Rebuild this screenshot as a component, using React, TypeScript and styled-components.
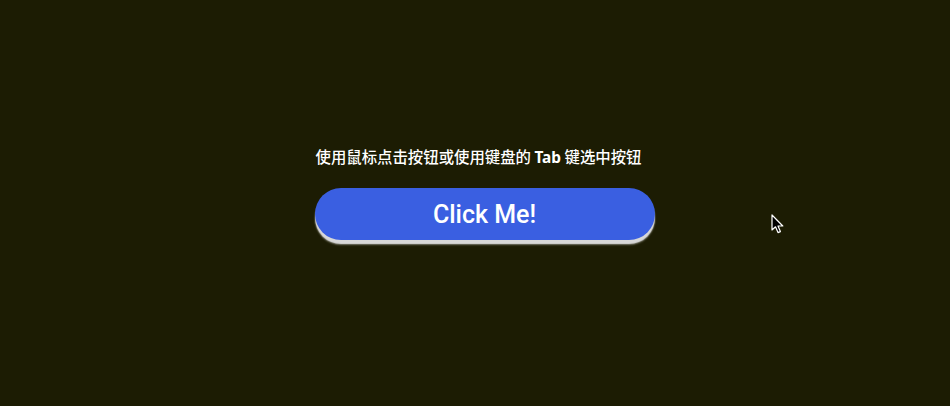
import React from "react";
import styled, { createGlobalStyle } from "styled-components";

const Global = createGlobalStyle`
  html, body { margin: 0; padding: 0; background: #1c1c03; }
  body { font-family: "Noto Sans CJK SC", "Noto Sans", sans-serif; }
`;

const Page = styled.main`
  width: 950px;
  height: 406px;
  background: #1c1c03;
  display: flex;
  flex-direction: column;
  align-items: center;
  box-sizing: border-box;
  padding-top: 142px;
  padding-left: 19px;
  position: relative;
  overflow: hidden;
`;

const Hint = styled.p`
  margin: 0 12px 0 0;
  color: #ffffff;
  font-family: "Noto Sans CJK SC", sans-serif;
  font-size: 15.4px;
  font-weight: 500;
  line-height: 28px;
  b { font-weight: 700; font-family: "Noto Sans", "Noto Sans CJK SC", sans-serif; }
`;

const Button = styled.button`
  margin-top: 16px;
  width: 340px;
  height: 52px;
  border: none;
  border-radius: 26px;
  background: #3a5fe1;
  color: #ffffff;
  font-family: Roboto, "Liberation Sans", Arial, sans-serif;
  font-size: 25px;
  font-weight: 500;
  cursor: pointer;
  box-shadow: 0 4px 1px #d8d8d8, 0 5px 2px rgba(255, 255, 255, 0.35);
  padding: 0;
`;

const Cursor = styled.svg`
  position: absolute;
  left: 771px;
  top: 214px;
`;

export default function App() {
  return (
    <>
      <Global />
      <Page>
        <Hint>
          使用鼠标点击按钮或使用键盘的 <b>Tab</b> 键选中按钮
        </Hint>
        <Button>Click Me!</Button>
        <Cursor width="14" height="21" viewBox="0 0 14 21">
          <path
            d="M1 1 L1 16 L4.5 12.8 L7 18.6 L9.4 17.6 L7 12 L11.8 12 Z"
            fill="#000"
            stroke="#fff"
            strokeWidth="1.2"
            strokeLinejoin="round"
          />
        </Cursor>
      </Page>
    </>
  );
}
